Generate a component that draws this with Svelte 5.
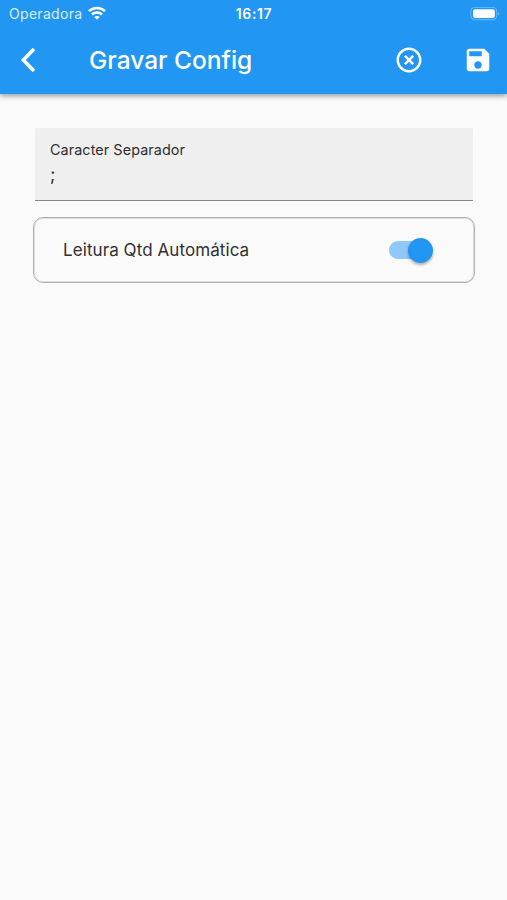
<script>
  let separator = ';';
  let autoQuantity = true;
</script>

<main>
  <header>
    <div class="status">
      <span class="carrier">Operadora</span>
      <svg class="wifi" viewBox="0 0 18 14" fill="none" stroke="#fff" stroke-width="2.6">
        <path d="M1 5.1C5.4 .9 12.6 .9 17 5.1" />
        <path d="M4 8.5C6.8 5.8 11.2 5.8 14 8.5" />
        <path d="M9 13.8L6.2 11C7.8 9.5 10.2 9.5 11.8 11Z" fill="#fff" stroke="none" />
      </svg>
      <span class="time">16:17</span>
      <svg class="battery" viewBox="0 0 30 14">
        <rect x=".8" y=".3" width="26" height="12.4" rx="4" fill="none" stroke="#fff" stroke-opacity=".35" />
        <rect x="3" y="2.2" width="21.8" height="8.8" rx="2" fill="#fff" />
        <path d="M28.3 4.5v4q1.6-2 0-4" fill="#fff" fill-opacity=".5" />
      </svg>
    </div>
    <div class="toolbar">
      <button class="back" aria-label="Voltar">
        <svg viewBox="0 0 16 26"><path d="M14 2L3.4 13L14 24" fill="none" stroke="#fff" stroke-width="3.6" /></svg>
      </button>
      <h1>Gravar Config</h1>
      <button class="cancel" aria-label="Cancelar">
        <svg viewBox="0 0 24 24"><path d="M14.59 8L12 10.59 9.41 8 8 9.41 10.59 12 8 14.59 9.41 16 12 13.41 14.59 16 16 14.59 13.41 12 16 9.41 14.59 8zM12 2C6.47 2 2 6.47 2 12s4.47 10 10 10 10-4.47 10-10S17.53 2 12 2zm0 18c-4.41 0-8-3.59-8-8s3.59-8 8-8 8 3.59 8 8-3.59 8-8 8z" /></svg>
      </button>
      <button aria-label="Gravar">
        <svg viewBox="0 0 24 24"><path d="M17 3H5c-1.11 0-2 .9-2 2v14c0 1.1.89 2 2 2h14c1.1 0 2-.9 2-2V7l-4-4zm-5 16c-1.66 0-3-1.34-3-3s1.34-3 3-3 3 1.34 3 3-1.34 3-3 3zm3-10H5V5h10v4z" /></svg>
      </button>
    </div>
  </header>

  <label class="field">
    <span>Caracter Separador</span>
    <input bind:value={separator} />
  </label>

  <div class="option">
    <span>Leitura Qtd Automática</span>
    <button
      class="switch"
      class:on={autoQuantity}
      role="switch"
      aria-checked={autoQuantity}
      aria-label="Leitura Qtd Automática"
      on:click={() => (autoQuantity = !autoQuantity)}
    >
      <span class="thumb"></span>
    </button>
  </div>
</main>

<style>
  :global(body) {
    background: #fafafa;
  }
  main {
    min-height: 900px;
    font-family: Inter, sans-serif;
    color: #303030;
  }
  button {
    display: flex;
    padding: 0;
    border: none;
    background: none;
    cursor: pointer;
  }
  header {
    height: 94px;
    background: #2196f3;
    color: #fff;
    box-shadow: 0 2px 5px rgba(0, 0, 0, 0.38);
  }
  .status {
    display: grid;
    grid-template-columns: 73px 20px 1fr 30px;
    align-items: center;
    height: 27px;
    padding: 0 7px 0 9px;
    font-size: 14px;
  }
  .carrier {
    color: #d9eeff;
    letter-spacing: 0.3px;
    white-space: nowrap;
  }
  .wifi {
    width: 18px;
    height: 14px;
    margin: 0 0 1px 6px;
  }
  .time {
    justify-self: center;
    margin-right: 64px;
    font-weight: 600;
    letter-spacing: 0.6px;
  }
  .battery {
    width: 30px;
    height: 14px;
  }
  .toolbar {
    display: flex;
    align-items: center;
    height: 65px;
    padding: 0 14px 0 20px;
    box-sizing: border-box;
  }
  .toolbar svg {
    width: 30px;
    height: 30px;
    fill: #fff;
  }
  .toolbar .back svg {
    width: 16px;
    height: 26px;
  }
  h1 {
    flex: 1;
    margin: 0 0 0 53px;
    font-size: 24.5px;
    font-weight: 500;
    line-height: 30px;
    letter-spacing: 0;
  }
  .cancel {
    margin-right: 39px;
  }
  .field {
    display: block;
    height: 73px;
    margin: 34px 34px 0 35px;
    padding: 12px 15px 0;
    box-sizing: border-box;
    border-bottom: 1px solid #858585;
    border-radius: 1px 1px 0 0;
    background: #efefef;
  }
  .field span {
    display: block;
    font-size: 14.4px;
    line-height: 20px;
    letter-spacing: 0.07px;
  }
  input {
    display: block;
    width: 100%;
    height: 28px;
    padding: 0;
    border: none;
    outline: none;
    background: none;
    color: #303030;
    font-family: inherit;
    font-size: 18px;
  }
  .option {
    display: flex;
    align-items: center;
    justify-content: space-between;
    height: 66px;
    margin: 16px 32px 0 33px;
    padding: 0 42px 0 29px;
    box-sizing: border-box;
    border: 1px solid #b0b0b0;
    border-radius: 10px;
    box-shadow: inset 0 0 0 1px #dedede;
    font-size: 17px;
    letter-spacing: 0.08px;
  }
  .switch {
    align-items: center;
    width: 43px;
    height: 18px;
    border-radius: 9px;
    background: #bdbdbd;
  }
  .switch.on {
    justify-content: flex-end;
    background: #90c8f7;
  }
  .thumb {
    flex: none;
    width: 25px;
    height: 25px;
    margin-right: -1px;
    border-radius: 50%;
    background: #fff;
    box-shadow: 0 2px 3px rgba(0, 0, 0, 0.3);
  }
  .on .thumb {
    background: #2196f3;
  }
</style>
